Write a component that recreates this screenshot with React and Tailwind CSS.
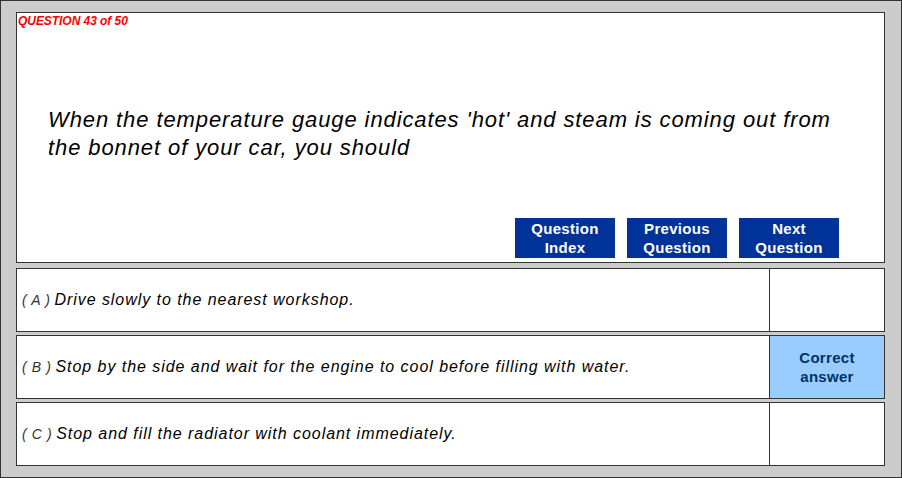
const answers = [
  { key: 'A', text: 'Drive slowly to the nearest workshop.', correct: false },
  { key: 'B', text: 'Stop by the side and wait for the engine to cool before filling with water.', correct: true },
  { key: 'C', text: 'Stop and fill the radiator with coolant immediately.', correct: false },
];

const buttons = [
  ['Question', 'Index'],
  ['Previous', 'Question'],
  ['Next', 'Question'],
];

export default function App() {
  return (
    <div className="w-[902px] h-[478px] bg-[#cccccc] border border-[#333333] pl-[15px] pr-[16px] pt-[11px] flex flex-col gap-[5px] font-['Liberation_Sans',Arial,sans-serif]">
      {/* Question panel */}
      <div className="h-[251px] bg-white border border-[#333333] flex flex-col">
        <div className="pl-[1px] pt-[1px] text-[12px] leading-[14px] font-bold italic text-[#ff0000] tracking-[-0.05px]">
          QUESTION 43 of 50
        </div>
        <div className="pl-[31px] pt-[78px] text-[22px] leading-[28px] italic text-black tracking-[0.9px]">
          When the temperature gauge indicates 'hot' and steam is coming out from
          <br />
          the bonnet of your car, you should
        </div>
        <div className="flex justify-end gap-[12px] pr-[45px] mt-[56px]">
          {buttons.map(([a, b]) => (
            <button
              key={a + b}
              className="w-[100px] h-[40px] bg-[#003399] text-white font-bold text-[15px] leading-[19px] tracking-[0.3px] flex flex-col items-center justify-center"
            >
              <span>{a}</span>
              <span>{b}</span>
            </button>
          ))}
        </div>
      </div>

      {/* Answers */}
      <div className="flex flex-col gap-[3px]">
        {answers.map((ans) => (
          <div key={ans.key} className="h-[64px] bg-white border border-[#333333] flex">
            <div className="flex-1 flex items-center pl-[5px] italic text-[16px] text-black tracking-[0.95px]">
              <span className="text-[14px] text-[#333333] font-light mr-[4px] tracking-[0.6px]">( {ans.key} )</span>
              <span>{ans.text}</span>
            </div>
            <div
              className={`w-[115px] border-l border-[#333333] flex flex-col items-center justify-center font-bold text-[15px] leading-[19px] tracking-[0.3px] text-[#003366] ${
                ans.correct ? 'bg-[#99ccff]' : 'bg-white'
              }`}
            >
              {ans.correct && (
                <>
                  <span>Correct</span>
                  <span>answer</span>
                </>
              )}
            </div>
          </div>
        ))}
      </div>
    </div>
  );
}
